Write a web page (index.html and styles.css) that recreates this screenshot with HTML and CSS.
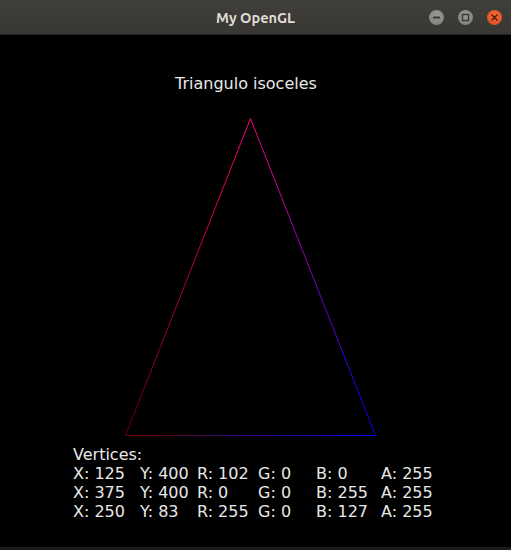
FILE: index.html
```html
<!DOCTYPE html>
<html>
<head>
<meta charset="utf-8">
<link rel="stylesheet" href="styles.css">
</head>
<body>
<div class="window">
  <header class="titlebar">
    <div></div>
    <div class="title">My OpenGL</div>
    <div class="buttons">
      <span class="btn btn-min"><svg width="15" height="15" viewBox="0 0 15 15"><rect x="4" y="6.5" width="7" height="2" rx="0.5" fill="#3a3935"/></svg></span>
      <span class="btn btn-max"><svg width="15" height="15" viewBox="0 0 15 15"><rect x="4.5" y="4.5" width="6" height="6" fill="none" stroke="#3a3935" stroke-width="1.4"/></svg></span>
      <span class="btn btn-close"><svg width="15" height="15" viewBox="0 0 15 15"><path d="M5 5 L10 10 M10 5 L5 10" stroke="#4a1a08" stroke-width="1.4" stroke-linecap="round"/></svg></span>
    </div>
  </header>
  <main class="canvas">
    <svg class="scene" width="511" height="512" viewBox="0 0 511 512">
      <defs>
        <linearGradient id="gLeft" gradientUnits="userSpaceOnUse" x1="125" y1="400" x2="250" y2="83">
          <stop offset="0" stop-color="rgb(102,0,0)"/>
          <stop offset="1" stop-color="rgb(255,0,127)"/>
        </linearGradient>
        <linearGradient id="gRight" gradientUnits="userSpaceOnUse" x1="250" y1="83" x2="375" y2="400">
          <stop offset="0" stop-color="rgb(255,0,127)"/>
          <stop offset="1" stop-color="rgb(0,0,255)"/>
        </linearGradient>
        <linearGradient id="gBottom" gradientUnits="userSpaceOnUse" x1="125" y1="400" x2="375" y2="400">
          <stop offset="0" stop-color="rgb(102,0,0)"/>
          <stop offset="1" stop-color="rgb(0,0,255)"/>
        </linearGradient>
      </defs>
      <line x1="125.5" y1="400.5" x2="250.5" y2="83.5" stroke="url(#gLeft)" stroke-width="1"/>
      <line x1="250.5" y1="83.5" x2="375.5" y2="400.5" stroke="url(#gRight)" stroke-width="1"/>
      <rect x="125" y="400" width="251" height="1" fill="url(#gBottom)"/>
    </svg>
    <div class="heading">Triangulo isoceles</div>
    <div class="vertices">
      <div class="label">Vertices:</div>
      <div class="row"><span>X: 125</span><span>Y: 400</span><span>R: 102</span><span>G: 0</span><span>B: 0</span><span>A: 255</span></div>
      <div class="row"><span>X: 375</span><span>Y: 400</span><span>R: 0</span><span>G: 0</span><span>B: 255</span><span>A: 255</span></div>
      <div class="row"><span>X: 250</span><span>Y: 83</span><span>R: 255</span><span>G: 0</span><span>B: 127</span><span>A: 255</span></div>
    </div>
  </main>
  <footer class="edge"></footer>
</div>
</body>
</html>
```
FILE: styles.css
```css
html, body {
  margin: 0;
  padding: 0;
  background: #000;
}
.window {
  width: 511px;
  height: 550px;
  display: flex;
  flex-direction: column;
  overflow: hidden;
}
.titlebar {
  height: 34px;
  border-bottom: 1px solid #262522;
  background: linear-gradient(#403f3b, #383733);
  display: grid;
  grid-template-columns: 1fr auto 1fr;
  align-items: center;
  flex: none;
}
.title {
  font-family: "Ubuntu", "Noto Sans", sans-serif;
  font-weight: 700;
  font-size: 14.5px;
  color: #dfdbd2;
  padding-top: 1px;
}
.buttons {
  display: flex;
  justify-content: flex-end;
  gap: 14px;
  padding-right: 9px;
  padding-top: 0;
}
.btn {
  width: 15px;
  height: 15px;
  border-radius: 50%;
  display: block;
}
.btn svg { display: block; }
.btn-min, .btn-max {
  background: radial-gradient(circle at 50% 35%, #9a9894, #7e7c78);
}
.btn-close {
  background: radial-gradient(circle at 50% 35%, #f06a3a, #dd4a17);
}
.canvas {
  position: relative;
  flex: 1;
  font-family: "DejaVu Sans", sans-serif;
  font-size: 16px;
  line-height: 19px;
  color: #e8e8e8;
}
.scene {
  position: absolute;
  left: 0;
  top: 0;
}
.heading {
  position: relative;
  margin-top: 39px;
  margin-left: 175px;
}
.vertices {
  position: relative;
  margin-top: 352px;
  margin-left: 73px;
}
.row {
  display: grid;
  grid-template-columns: 67px 57px 61px 58px 65px auto;
  white-space: nowrap;
}
.edge {
  height: 3px;
  flex: none;
  background: #1b1b1b;
}
```
